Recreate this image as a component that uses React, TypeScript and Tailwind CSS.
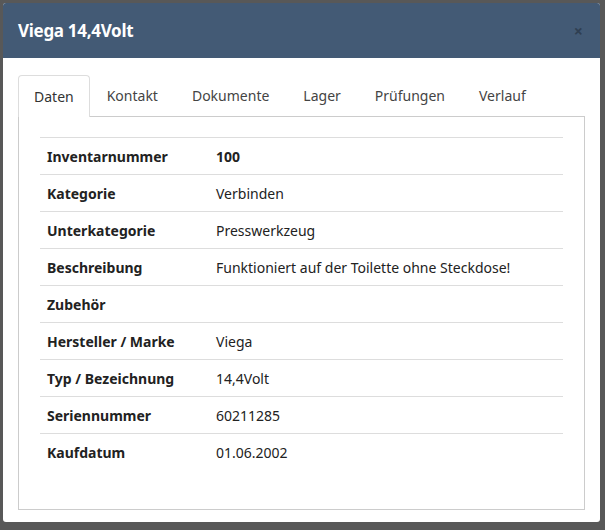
import React from 'react';

const rows: [string, string][] = [
    ['Inventarnummer', '100'],
    ['Kategorie', 'Verbinden'],
    ['Unterkategorie', 'Presswerkzeug'],
    ['Beschreibung', 'Funktioniert auf der Toilette ohne Steckdose!'],
    ['Zubehör', ''],
    ['Hersteller / Marke', 'Viega'],
    ['Typ / Bezeichnung', '14,4Volt'],
    ['Seriennummer', '60211285'],
    ['Kaufdatum', '01.06.2002'],
];

const tabs = ['Daten', 'Kontakt', 'Dokumente', 'Lager', 'Prüfungen', 'Verlauf'];

const App: React.FC = () => {
    return (
        <div className="w-[605px] h-[530px] bg-[#585858] pt-[3px] px-[3px] font-['Open_Sans',sans-serif] text-[14px]">
            <div className="w-[597px] h-[519px] bg-white rounded-[3px] overflow-hidden flex flex-col">
                {/* Header */}
                <div className="h-[55px] bg-[#435a75] flex items-center justify-between px-[15px] shrink-0">
                    <span className="text-white font-bold text-[17px] tracking-[-0.3px]">Viega 14,4Volt</span>
                    <span className="text-[#2f3f52] font-bold text-[16px] mr-[2px]">×</span>
                </div>

                <div className="flex-1 flex flex-col px-[15px] pt-[16px] pb-[12px]">
                    {/* Tabs */}
                    <div className="flex h-[42px] shrink-0">
                        {tabs.map((t, i) => (
                            <div
                                key={t}
                                className={
                                    i === 0
                                        ? 'px-[15px] flex items-center border border-b-0 border-[#ddd] rounded-t-[4px] bg-white text-[#333] relative top-[1px] z-10'
                                        : 'px-[17px] flex items-center text-[#444]'
                                }
                            >
                                {t}
                            </div>
                        ))}
                    </div>

                    {/* Panel */}
                    <div className="flex-1 border border-[#ccc] px-[21px] pt-[20px]">
                        <div className="border-t border-[#ddd]">
                            {rows.map(([k, v], i) => (
                                <div
                                    key={k}
                                    className={`flex h-[37px] items-center px-[7px] text-[#222] ${i < rows.length - 1 ? 'border-b border-[#ddd]' : ''}`}
                                >
                                    <span className="w-[169px] font-bold">{k}</span>
                                    <span className={i === 0 ? 'font-bold' : ''}>{v}</span>
                                </div>
                            ))}
                        </div>
                    </div>
                </div>
            </div>
        </div>
    );
};

export default App;
